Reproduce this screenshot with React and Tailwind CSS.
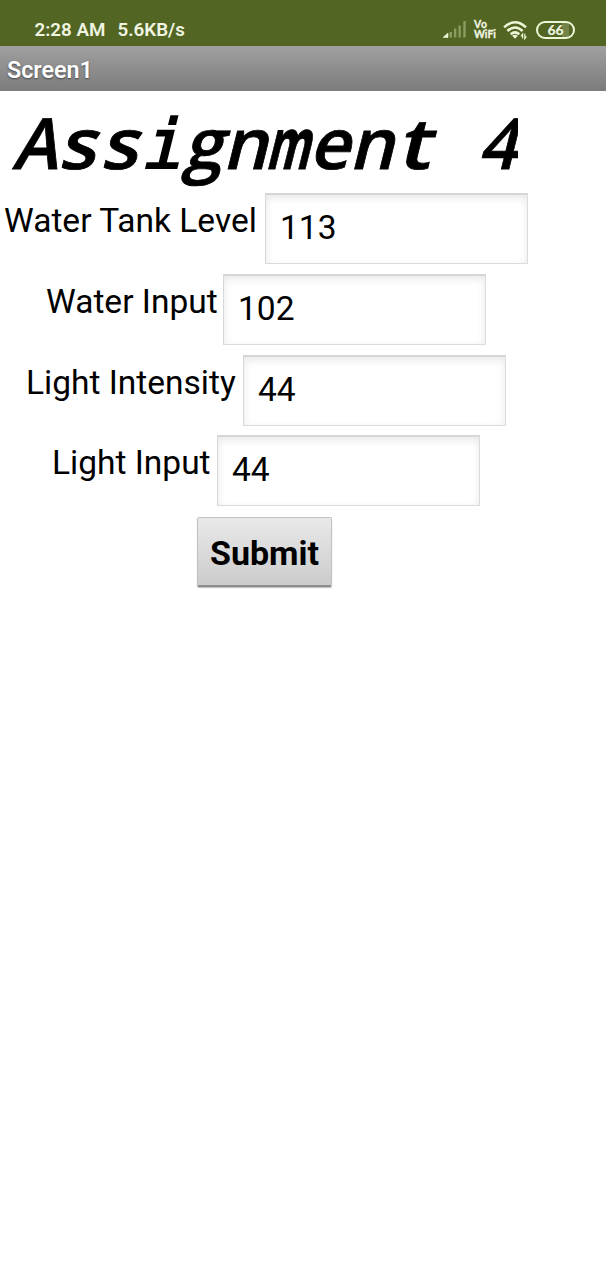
import React from "react";

const open = "font-['Open_Sans'] font-semibold [-webkit-text-stroke:0.8px_black]";
const title = [
  ["A", `${open} scale-x-[0.96]`],
  ["s", `${open} scale-x-[1.08]`],
  ["s", `${open} scale-x-[1.08]`],
  ["i", "font-['DejaVu_Sans_Mono'] text-[68px] pt-[3px] [-webkit-text-stroke:2px_black]"],
  ["g", open],
  ["n", open],
  ["m", "font-['Open_Sans'] font-bold scale-x-[0.63] [-webkit-text-stroke:1px_black]"],
  ["e", open],
  ["n", open],
  ["t", `${open} scale-x-[1.2]`],
  ["\u00a0", open],
  ["4", `${open} scale-x-[0.96]`],
];

const rows = [
  ["Water Tank Level", "113", "w-[262px]"],
  ["Water Input", "102", "w-[178px]"],
  ["Light Intensity", "44", "w-[218px]"],
  ["Light Input", "44", "w-[166px]"],
];

function Signal() {
  return (
    <svg className="h-[20px] w-[26px]" viewBox="0 0 26 20">
      <path d="M0 18.5 5 14V18.5Z" fill="#f0f8d8" stroke="#f0f8d8" strokeWidth="0.6" />
      <path d="M6.5 18.5V13H9V18.5ZM11 18.5V9.5H13.3V18.5ZM15.5 18.5V6.5H17.8V18.5ZM20.3 18.5V2H22.7V18.5Z" fill="#8c9c61" />
    </svg>
  );
}

function Wifi() {
  return (
    <svg className="h-[22px] w-[26px]" viewBox="0 0 26 22" fill="none" stroke="#edf7d7" strokeWidth="2.5">
      <path d="M1.1 8.4Q12 -1.8 23 8.4M4.4 12Q12 5 19.6 12M7.7 15.3Q12 11.4 16.3 15.3" />
      <path d="m9.2 16.8q2.8-2 5.6 0L12 19.8Z" fill="#edf7d7" stroke="none" />
      <path d="M19.6 19.6V15.1l-1.6 2.2M21.8 14.8v4.8l1.6-2.2" strokeWidth="1.2" />
    </svg>
  );
}

export default function App() {
  return (
    <div className="min-h-[1280px] w-[606px] overflow-hidden bg-white font-['Roboto',sans-serif] text-black">
      <div className="flex h-[46px] justify-between bg-[#526523] text-[#f0f5e2]">
        <div className="flex gap-[12px] pt-[16px] pl-[34.5px] text-[18.8px] leading-[28px] font-semibold whitespace-nowrap">
          <span>2:28 AM</span>
          <span>5.6KB/s</span>
        </div>
        <div className="flex pt-[19px] pr-[31px]">
          <Signal />
          <div className="ml-[5px] w-[29px] font-['Lato'] text-[10.4px] leading-[10px] font-bold [-webkit-text-stroke:0.3px_#f0f5e2]">
            <div className="tracking-[0.5px]">Vo</div>
            <div>WiFi</div>
          </div>
          <Wifi />
          <div className="mt-[2px] ml-[7px] flex h-[18px] w-[39px] items-center justify-center rounded-full border-2 border-[#edf7d7] bg-[linear-gradient(90deg,#526523_68%,#74834a_68%,#74834a_90%,#526523_90%)] font-['Lato'] text-[14px] leading-none font-black">
            66
          </div>
        </div>
      </div>
      <div className="h-[45px] bg-linear-to-b from-[#a0a0a0] to-[#7c7c7c] pt-[9px] pl-[7px] text-[23.3px] leading-[30px] font-semibold text-white [text-shadow:0_1px_2px_#444]">
        Screen1
      </div>
      <main className="w-[530px]">
        <h1 aria-label="Assignment 4" className="h-[102px] w-[518px] overflow-hidden pt-[3px] pl-[13px]">
          <span className="flex w-[507px] origin-[0_76px] -skew-x-[14deg] text-[70.5px] leading-[96px]">
            {title.map(([letter, style], i) => (
              <span key={i} className="flex w-[42.1px] shrink-0 justify-center">
                <span className={`block h-[96px] leading-[96px] ${style}`}>{letter}</span>
              </span>
            ))}
          </span>
        </h1>
        <div className="flex flex-col gap-[9.8px]">
          {rows.map(([label, value, width]) => (
            <div key={label} className="flex h-[71px] justify-center pl-[1px] text-[33.5px] leading-[40px]">
              <label className={`${width} shrink-0 pt-[8px] pl-[1px] whitespace-nowrap`}>{label}</label>
              <div className="h-[71px] w-[263px] shrink-0 border border-t-2 border-t-[#d6d6d6] border-r-[#dcdcdc] border-b-[#dcdcdc] border-l-[#d8d8d8] bg-white pt-[13px] pl-[14px] shadow-[inset_0_3px_9px_#e8e8e8]">
                {value}
              </div>
            </div>
          ))}
        </div>
        <button className="mt-[11px] ml-[197px] block h-[70px] w-[135px] rounded-[2px] border border-[#c2c2c2] border-b-2 border-b-[#8c8c8c] bg-linear-to-b from-[#e9e9e9] to-[#cccccc] pt-[2px] text-[34px] leading-[62px] font-bold shadow-[0_1px_1px_#bbbbbb]">
          Submit
        </button>
      </main>
    </div>
  );
}
